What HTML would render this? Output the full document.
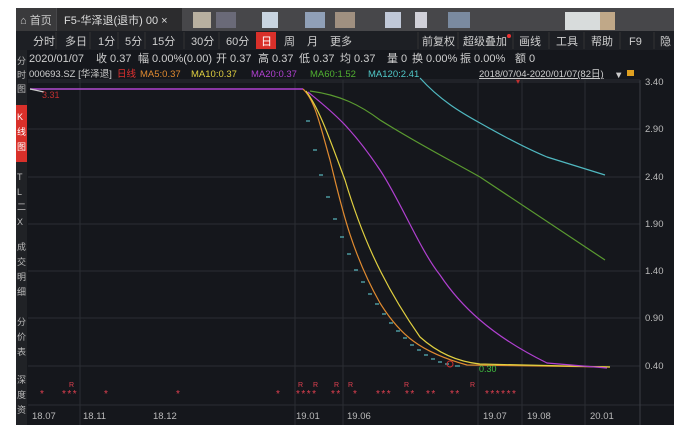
<!DOCTYPE html>
<html><head><meta charset="utf-8"><style>
body{margin:0;background:#fff;width:693px;height:436px;overflow:hidden;font-family:"Liberation Sans","Noto Sans CJK SC",sans-serif}
svg{position:absolute;left:0;top:0}
</style></head><body>
<svg width="693" height="436" font-family="Liberation Sans, Noto Sans CJK SC, sans-serif">
<rect x="16" y="8" width="658" height="417" fill="#15171c"/>
<rect x="16" y="8" width="658" height="23" fill="#47474a"/>
<rect x="16" y="8" width="40" height="23" fill="#3a3a3c"/>
<rect x="57" y="8" width="125" height="23" fill="#2c2c2e"/>
<text x="20" y="24" font-size="11" fill="#ccc">⌂ 首页</text>
<text x="64" y="24" font-size="11" fill="#ddd">F5-华泽退(退市) 00 ×</text>
<rect x="193" y="12" width="18" height="16" fill="#b8b0a0"/><rect x="216" y="12" width="20" height="16" fill="#6a6a78"/>
<rect x="262" y="12" width="16" height="16" fill="#c8d4e0"/><rect x="305" y="12" width="20" height="16" fill="#90a0b8"/>
<rect x="335" y="12" width="20" height="16" fill="#a09080"/><rect x="385" y="12" width="16" height="16" fill="#c0c8d8"/>
<rect x="415" y="12" width="12" height="16" fill="#d0d0d8"/><rect x="448" y="12" width="22" height="16" fill="#7a8aa0"/>
<rect x="565" y="12" width="35" height="18" fill="#d8dcdc"/><rect x="600" y="12" width="15" height="18" fill="#c0a888"/>
<rect x="16" y="31" width="658" height="19" fill="#1d1f24"/>
<g font-size="11" fill="#cfcfcf">
<text x="33" y="45">分时</text><text x="65" y="45">多日</text><text x="98" y="45">1分</text><text x="125" y="45">5分</text><text x="152" y="45">15分</text><text x="191" y="45">30分</text><text x="226" y="45">60分</text>
<rect x="256" y="32" width="20" height="17" fill="#d9302a"/><text x="261" y="45" fill="#fff">日</text>
<text x="284" y="45">周</text><text x="307" y="45">月</text><text x="330" y="45">更多</text>
<text x="422" y="45">前复权</text><text x="463" y="45">超级叠加</text><circle cx="509" cy="36" r="2" fill="#e33"/><text x="519" y="45">画线</text><text x="556" y="45">工具</text><text x="591" y="45">帮助</text><text x="629" y="45">F9</text><text x="660" y="45">隐</text>
</g>
<g stroke="#333" stroke-width="1"><line x1="56" y1="32" x2="56" y2="49"/><line x1="90" y1="32" x2="90" y2="49"/><line x1="118" y1="32" x2="118" y2="49"/><line x1="145" y1="32" x2="145" y2="49"/><line x1="184" y1="32" x2="184" y2="49"/><line x1="219" y1="32" x2="219" y2="49"/><line x1="418" y1="32" x2="418" y2="49"/><line x1="458" y1="32" x2="458" y2="49"/><line x1="513" y1="32" x2="513" y2="49"/><line x1="549" y1="32" x2="549" y2="49"/><line x1="584" y1="32" x2="584" y2="49"/><line x1="620" y1="32" x2="620" y2="49"/><line x1="654" y1="32" x2="654" y2="49"/></g>
<g font-size="11" fill="#d0d0d0">
<text x="29" y="62">2020/01/07</text><text x="96" y="62">收 0.37</text><text x="138" y="62">幅 0.00%(0.00)</text><text x="216" y="62">开 0.37</text><text x="258" y="62">高 0.37</text><text x="299" y="62">低 0.37</text><text x="340" y="62">均 0.37</text><text x="387" y="62">量 0</text><text x="412" y="62">换 0.00%</text><text x="460" y="62">振 0.00%</text><text x="515" y="62">额 0</text>
</g>
<g font-size="9.5">
<text x="29" y="77" fill="#d0d0d0">000693.SZ [华泽退]</text>
<text x="117" y="77" fill="#e03030">日线</text>
<text x="140" y="77" fill="#e08a30">MA5:0.37</text>
<text x="191" y="77" fill="#e0d040">MA10:0.37</text>
<text x="251" y="77" fill="#b040d0">MA20:0.37</text>
<text x="310" y="77" fill="#50b030">MA60:1.52</text>
<text x="368" y="77" fill="#50c8c8">MA120:2.41</text>
<text x="479" y="77" fill="#d0d0d0" text-decoration="underline">2018/07/04-2020/01/07(82日)</text>
<text x="614" y="78" fill="#ccc">▼</text><rect x="627" y="70" width="7" height="6" fill="#e0a020"/>
</g>
<rect x="16" y="50" width="11" height="375" fill="#202226"/>
<rect x="16" y="105" width="11" height="57" fill="#d9302a"/>
<g font-size="9" fill="#bbb">
<text x="17" y="64">分</text><text x="17" y="78">时</text><text x="17" y="92">图</text>
<text x="17" y="120" fill="#fff">K</text><text x="17" y="135" fill="#fff">线</text><text x="17" y="150" fill="#fff">图</text>
<text x="17" y="180">T</text><text x="17" y="195">L</text><text x="17" y="210">二</text><text x="17" y="225">X</text>
<text x="17" y="250">成</text><text x="17" y="265">交</text><text x="17" y="280">明</text><text x="17" y="295">细</text>
<text x="17" y="325">分</text><text x="17" y="340">价</text><text x="17" y="355">表</text>
<text x="17" y="383">深</text><text x="17" y="398">度</text><text x="17" y="413">资</text>
</g>
<g stroke="#2a2d33" stroke-width="1">
<line x1="28" y1="82" x2="640" y2="82"/><line x1="28" y1="129" x2="640" y2="129"/><line x1="28" y1="177" x2="640" y2="177"/><line x1="28" y1="224" x2="640" y2="224"/><line x1="28" y1="271" x2="640" y2="271"/><line x1="28" y1="318" x2="640" y2="318"/><line x1="28" y1="366" x2="640" y2="366"/><line x1="28" y1="405" x2="674" y2="405"/>
<line x1="80" y1="80" x2="80" y2="425"/><line x1="295" y1="80" x2="295" y2="425"/><line x1="343" y1="80" x2="343" y2="425"/><line x1="478" y1="80" x2="478" y2="425"/><line x1="522" y1="80" x2="522" y2="425"/><line x1="585" y1="80" x2="585" y2="425"/>
</g>
<line x1="640" y1="80" x2="640" y2="425" stroke="#3a3d44"/>
<line x1="28" y1="80" x2="640" y2="80" stroke="#2a2d33"/>
<g font-size="9.5" fill="#bbb">
<text x="645" y="85">3.40</text><text x="645" y="132">2.90</text><text x="645" y="180">2.40</text><text x="645" y="227">1.90</text><text x="645" y="274">1.40</text><text x="645" y="321">0.90</text><text x="645" y="369">0.40</text>
<text x="32" y="419">18.07</text><text x="83" y="419">18.11</text><text x="153" y="419">18.12</text><text x="296" y="419">19.01</text><text x="347" y="419">19.06</text><text x="483" y="419">19.07</text><text x="527" y="419">19.08</text><text x="590" y="419">20.01</text>
</g>
<g fill="none" stroke-width="1.2">
<path d="M30 89 L120 89" stroke="#3a9a30"/>
<path d="M30 89 L303 89" stroke="#b040d0" stroke-width="1.5"/>
<path d="M303 89 C315 100 320 125 330 160 C340 200 350 250 380 303 C400 335 420 352 467 365 L610 367" stroke="#e08a30"/>
<path d="M306 91 C320 110 330 140 345 180 C360 230 380 280 420 337 C440 355 460 362 480 364 L610 367" stroke="#e0d040"/>
<path d="M308 92 C330 110 350 125 380 170 C400 200 420 250 440 275 C460 305 490 335 547 363 L607 368" stroke="#b040d0"/>
<path d="M310 91 C340 95 360 105 380 120 C420 145 450 160 480 177 L605 260" stroke="#5a9a30"/>
<path d="M420 78 C440 100 460 112 480 123 C510 140 530 150 547 157 L605 175" stroke="#50b8c0"/>
<path d="M30 89 L44 92" stroke="#ccc"/>
</g>
<text x="42" y="98" font-size="9" fill="#c03030">3.31</text>
<g stroke="#5ab8c0" stroke-width="1.2">
<line x1="306" y1="121" x2="310" y2="121"/><line x1="313" y1="150" x2="317" y2="150"/><line x1="319" y1="175" x2="323" y2="175"/><line x1="326" y1="197" x2="330" y2="197"/><line x1="333" y1="219" x2="337" y2="219"/><line x1="340" y1="237" x2="344" y2="237"/><line x1="347" y1="254" x2="351" y2="254"/><line x1="354" y1="270" x2="358" y2="270"/><line x1="361" y1="282" x2="365" y2="282"/><line x1="368" y1="294" x2="372" y2="294"/><line x1="375" y1="304" x2="379" y2="304"/><line x1="382" y1="314" x2="386" y2="314"/><line x1="389" y1="323" x2="393" y2="323"/><line x1="396" y1="331" x2="400" y2="331"/><line x1="403" y1="338" x2="407" y2="338"/><line x1="410" y1="345" x2="414" y2="345"/><line x1="417" y1="350" x2="421" y2="350"/><line x1="424" y1="355" x2="428" y2="355"/><line x1="431" y1="359" x2="435" y2="359"/><line x1="438" y1="362" x2="442" y2="362"/><line x1="445" y1="364" x2="449" y2="364"/><line x1="455" y1="366" x2="460" y2="366"/>
</g>
<circle cx="450" cy="364" r="3" fill="none" stroke="#d03030"/>
<text x="479" y="372" font-size="9" fill="#40c040">0.30</text>
<text x="516" y="84" font-size="8" fill="#c03030">▾</text>
<g font-size="10" fill="#e04050" letter-spacing="1.5">
<text x="40" y="397">*</text><text x="62" y="397">***</text><text x="104" y="397">*</text><text x="176" y="397">*</text><text x="276" y="397">*</text><text x="296" y="397">****</text><text x="331" y="397">**</text><text x="353" y="397">*</text><text x="376" y="397">***</text><text x="405" y="397">**</text><text x="426" y="397">**</text><text x="450" y="397">**</text><text x="485" y="397">******</text>
</g>
<g font-size="7" fill="#e04050">
<text x="69" y="387">R</text><text x="298" y="387">R</text><text x="313" y="387">R</text><text x="334" y="387">R</text><text x="348" y="387">R</text><text x="404" y="387">R</text><text x="470" y="387">R</text>
</g>
</svg>
</body></html>
